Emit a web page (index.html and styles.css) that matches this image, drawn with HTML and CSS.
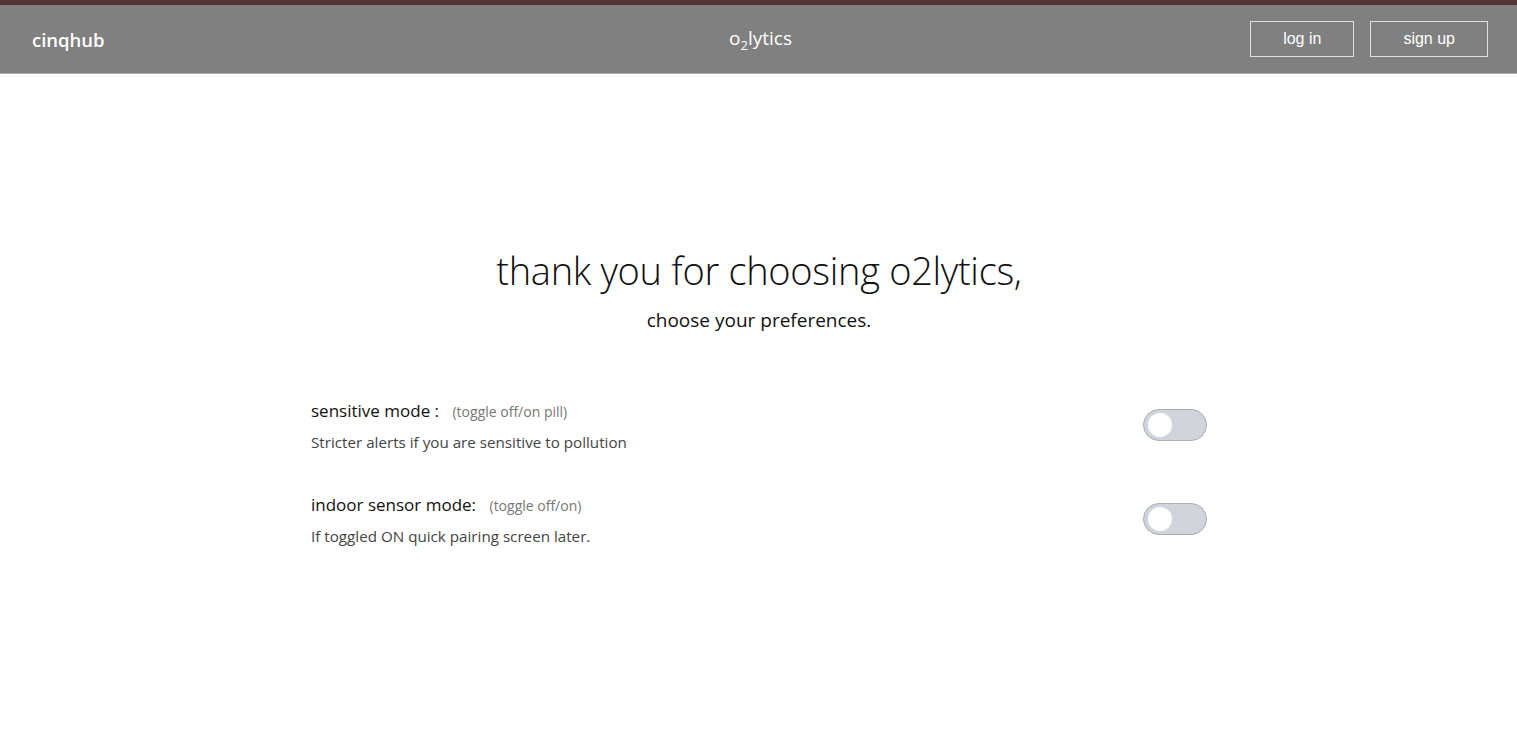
FILE: index.html
```html
<!DOCTYPE html>
<html lang="en">
<head>
    <meta charset="UTF-8">
    <meta name="viewport" content="width=device-width, initial-scale=1.0">
    <title>o2lytics - preferences</title>
    <link rel="stylesheet" href="styles.css">
</head>
<body>
    <header class="topbar">
        <div class="brand">cinqhub</div>
        <div class="product">o<sub>2</sub>lytics</div>
        <nav class="auth">
            <button class="btn">log in</button>
            <button class="btn">sign up</button>
        </nav>
    </header>

    <main class="prefs">
        <h1>thank you for choosing o2lytics,</h1>
        <p class="subtitle">choose your preferences.</p>

        <div class="pref-row">
            <div class="pref-text">
                <div class="pref-title">sensitive mode : <span class="hint">(toggle off/on pill)</span></div>
                <div class="pref-desc">Stricter alerts if you are sensitive to pollution</div>
            </div>
            <label class="toggle"><input type="checkbox"><span class="knob"></span></label>
        </div>

        <div class="pref-row">
            <div class="pref-text">
                <div class="pref-title">indoor sensor mode: <span class="hint">(toggle off/on)</span></div>
                <div class="pref-desc">If toggled ON quick pairing screen later.</div>
            </div>
            <label class="toggle"><input type="checkbox"><span class="knob"></span></label>
        </div>
    </main>
</body>
</html>
```

FILE: styles.css
```css
body {
    margin: 0;
    font-family: "Open Sans", "Noto Sans", sans-serif;
    background: #fff;
    color: #111;
}
.topbar {
    display: flex;
    align-items: center;
    justify-content: space-between;
    height: 68px;
    padding: 0 29px 0 32px;
    background: #808080;
    border-top: 5px solid #573434;
    border-bottom: 1px solid #a9b0b8;
    position: relative;
}
.brand {
    color: #fff;
    font-size: 18.5px;
    font-weight: 600;
}
.product {
    position: absolute;
    left: 50%;
    transform: translateX(-50%);
    color: #fff;
    font-size: 19px;
    margin-left: 2px;
}
.product sub {
    font-size: 13px;
    vertical-align: -5px;
}
.auth {
    display: flex;
    gap: 16px;
}
.btn {
    background: transparent;
    border: 1px solid #e0e0e0;
    color: #fff;
    font-family: "Liberation Sans", Arial, sans-serif;
    font-size: 16px;
    height: 36px;
    padding: 0 32px;
    cursor: pointer;
}
.prefs {
    width: 896px;
    margin: 0 auto;
    padding: 170px 0 0 1px;
}
h1 {
    margin: 0;
    text-align: center;
    font-weight: 300;
    font-size: 38px;
    letter-spacing: -0.3px;
}
.subtitle {
    margin: 11px 0 45px;
    text-align: center;
    font-size: 19px;
}
.pref-row {
    display: flex;
    align-items: center;
    justify-content: space-between;
    height: 94px;
}
.pref-title {
    font-size: 17px;
    color: #111;
}
.hint {
    font-size: 14px;
    color: #777;
    margin-left: 9px;
}
.pref-desc {
    margin-top: 10px;
    font-size: 15.2px;
    color: #444;
}
.toggle {
    position: relative;
    display: block;
    width: 64px;
    height: 32px;
}
.toggle input {
    display: none;
}
.knob {
    position: absolute;
    inset: 0;
    background: #d1d5db;
    border: 1px solid #a7aeb8;
    border-radius: 16px;
    box-sizing: border-box;
}
.knob::before {
    content: "";
    position: absolute;
    left: 4px;
    top: 3px;
    width: 24px;
    height: 24px;
    border-radius: 50%;
    background: #fff;
}
```
